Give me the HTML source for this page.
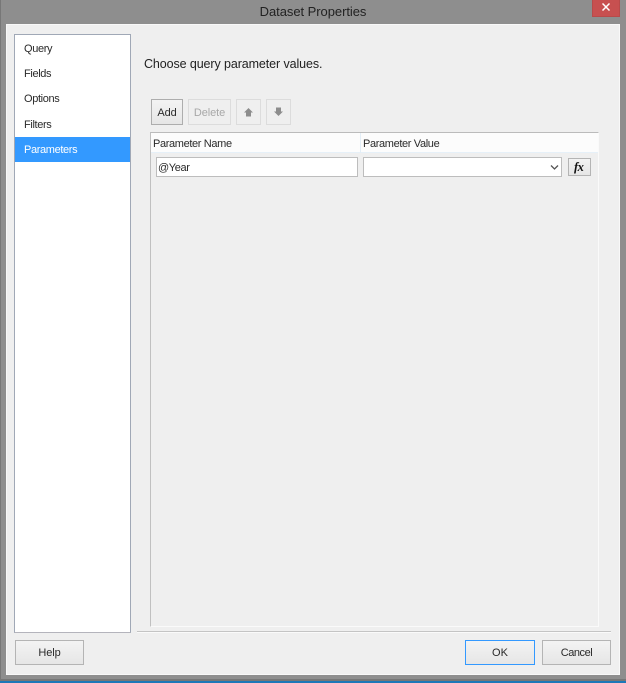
<!DOCTYPE html>
<html>
<head>
<meta charset="utf-8">
<style>
html,body{margin:0;padding:0;width:626px;height:683px;overflow:hidden;background:#8e8e8e;font-family:"Liberation Sans",sans-serif;font-size:11px;letter-spacing:-.36px;color:#2a2a2a}
div{position:absolute;box-sizing:border-box}
.t{white-space:nowrap;line-height:14px}
.btn{border:1px solid #b4b4b4;background:linear-gradient(#f3f3f3,#e6e6e6);text-align:center;line-height:25px}
.dis{border:1px solid #dcdcdc;background:#efefef;color:#a8a8a8;letter-spacing:-.1px}
</style>
</head>
<body>
<div style="left:0;top:0;width:1px;height:683px;background:#777"></div>
<div style="left:0;top:681px;width:626px;height:2px;background:#1d78b8"></div>
<div style="left:0;top:679px;width:626px;height:2px;background:#777"></div>
<div class="t" style="left:0;top:5px;width:626px;text-align:center;font-size:13px;letter-spacing:-.05px;color:#222">Dataset Properties</div>
<div style="left:592px;top:0;width:28px;height:17px;background:#c75050;border:1px solid #b84a4a;border-top:0"></div>
<svg style="position:absolute;left:602px;top:3px" width="8" height="8" viewBox="0 0 8 8"><path d="M.5 .5L7.5 7.5M7.5 .5L.5 7.5" stroke="#fff" stroke-width="1.5"/></svg>

<div style="left:6px;top:24px;width:614px;height:651px;background:#efefef;border:1px solid #f8f8f8"></div>

<div style="left:14px;top:34px;width:117px;height:599px;background:#fff;border:1px solid #a0a8b6;border-bottom-color:#b4b4bc"></div>
<div style="left:15px;top:137px;width:115px;height:25px;background:#3399ff"></div>
<div class="t" style="left:24px;top:42px">Query</div>
<div class="t" style="left:24px;top:67px">Fields</div>
<div class="t" style="left:24px;top:92px">Options</div>
<div class="t" style="left:24px;top:118px">Filters</div>
<div class="t" style="left:24px;top:143px;color:#fff">Parameters</div>

<div class="t" style="left:144px;top:57px;font-size:12.5px;letter-spacing:-.1px;color:#222">Choose query parameter values.</div>

<div class="btn" style="left:151px;top:99px;width:32px;height:26px;line-height:27px;border-color:#adadad;letter-spacing:-.1px">Add</div>
<div class="btn dis" style="left:188px;top:99px;width:43px;height:26px;line-height:27px">Delete</div>
<div class="btn dis" style="left:236px;top:99px;width:25px;height:26px"></div>
<div class="btn dis" style="left:266px;top:99px;width:25px;height:26px"></div>
<svg style="position:absolute;left:243px;top:107px" width="11" height="11" viewBox="0 0 11 11"><path d="M5.5 1L10 5.5H8V9.5H3V5.5H1Z" fill="#8d8d8d"/></svg>
<svg style="position:absolute;left:273px;top:106px" width="11" height="11" viewBox="0 0 11 11"><path d="M3 1.5H8V5.5H10L5.5 10L1 5.5H3Z" fill="#8d8d8d"/></svg>

<div style="left:150px;top:132px;width:449px;height:495px;border:1px solid #fafafa;border-top:1px solid #bbb;border-left:1px solid #c0c0c0"></div>
<div style="left:151px;top:133px;width:447px;height:20px;background:#fcfcfc;border-bottom:1px solid #e6f0f8"></div>
<div style="left:360px;top:133px;width:1px;height:20px;background:#e3eef7"></div>
<div class="t" style="left:153px;top:137px">Parameter Name</div>
<div class="t" style="left:363px;top:137px">Parameter Value</div>

<div style="left:156px;top:157px;width:202px;height:20px;background:#fff;border:1px solid #bdbdbd"></div>
<div class="t" style="left:158px;top:161px">@Year</div>
<div style="left:363px;top:157px;width:199px;height:20px;background:#fff;border:1px solid #bdbdbd"></div>
<svg style="position:absolute;left:550px;top:164px" width="9" height="7" viewBox="0 0 9 7"><path d="M1 1.5L4.5 5L8 1.5" fill="none" stroke="#555" stroke-width="1.3"/></svg>
<div class="btn" style="left:568px;top:158px;width:23px;height:18px;border-color:#b4b4b4"></div>
<div class="t" style="left:574px;top:160px;font-family:'Liberation Serif',serif;font-style:italic;font-weight:bold;font-size:12.5px;letter-spacing:-.5px;color:#111">fx</div>

<div style="left:137px;top:631px;width:474px;height:2px;background:#c4c4c4;border-bottom:1px solid #fafafa"></div>

<div class="btn" style="left:15px;top:640px;width:69px;height:25px;letter-spacing:-.1px">Help</div>
<div class="btn" style="left:465px;top:640px;width:70px;height:25px;border-color:#3399ff;letter-spacing:0">OK</div>
<div class="btn" style="left:542px;top:640px;width:69px;height:25px;letter-spacing:-.45px">Cancel</div>
</body>
</html>
